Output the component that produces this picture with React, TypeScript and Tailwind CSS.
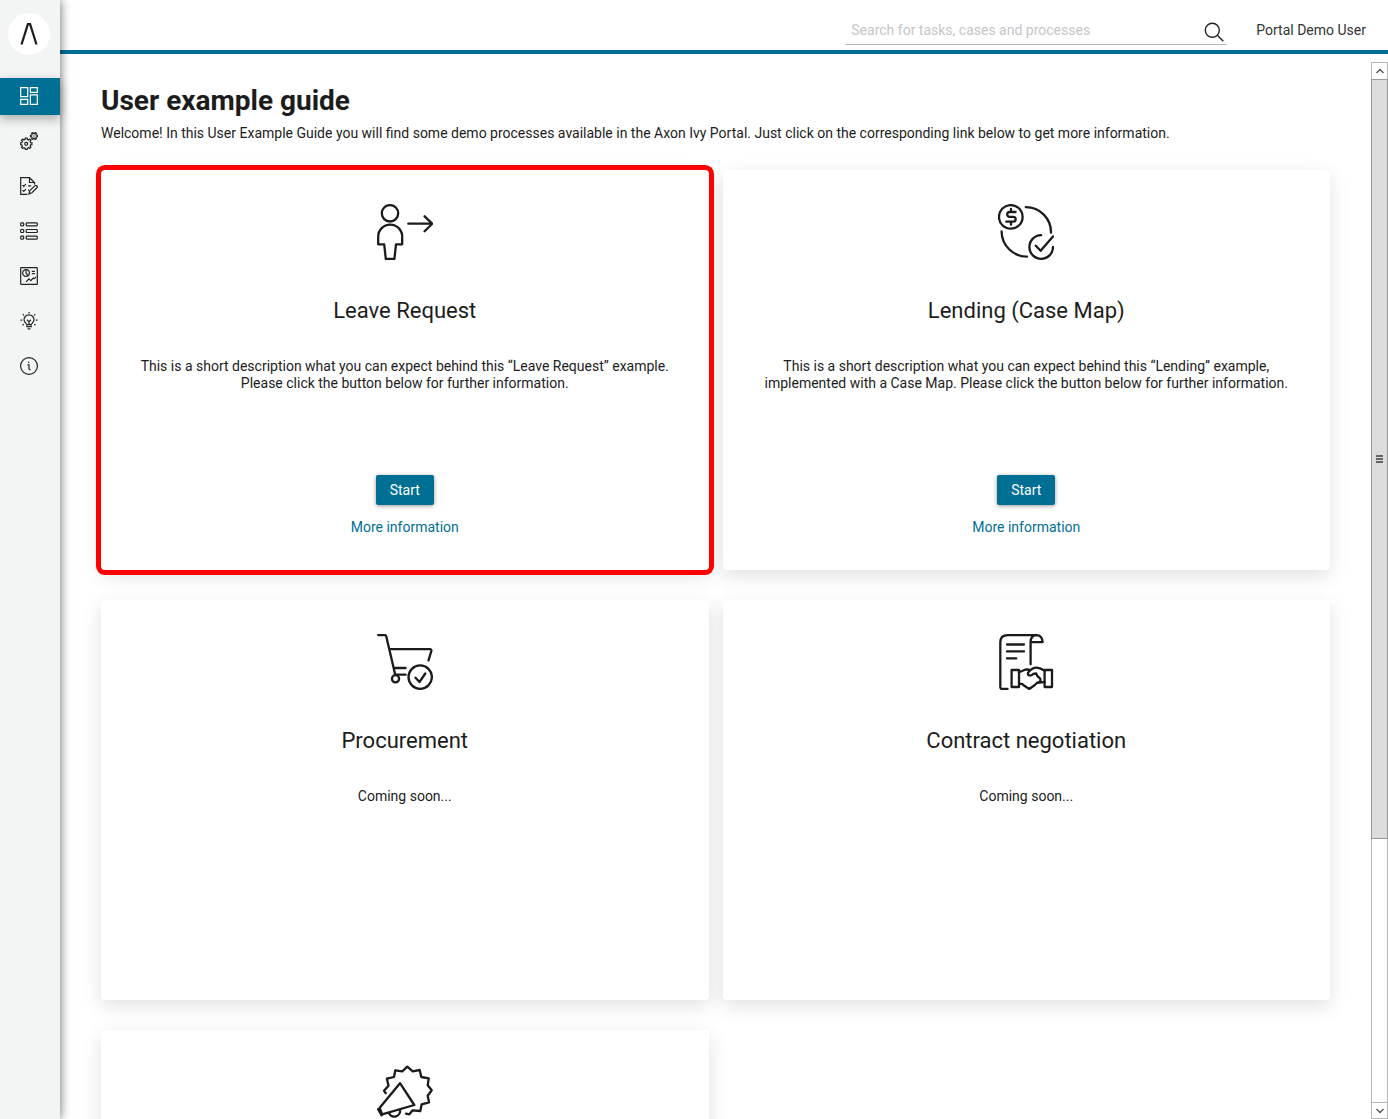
import type { ReactNode } from 'react'

function gearPath (cx: number, cy: number, outer: number, inner: number, teeth: number) {
	const points: string[] = []
	const step = (Math.PI * 2) / teeth
	for (let i = 0; i < teeth; i++) {
		const a = i * step
		const corners = [[-0.3, inner], [-0.2, outer], [0.2, outer], [0.3, inner]]
		corners.forEach(([o, r]) => {
			points.push(`${(cx + r * Math.cos(a + o * step)).toFixed(2)} ${(cy + r * Math.sin(a + o * step)).toFixed(2)}`)
		})
	}
	return `M${points.join('L')}Z`
}

const menu: { label: string, active?: boolean, icon: ReactNode }[] = [
	{
		label: 'Dashboard',
		active: true,
		icon: <path d="M.7.7h7v9h-7zM10.4.7h6.9v4.6h-6.9zM.7 12.3h7v5h-7zM10.4 7.8h6.9v9.5h-6.9z" />
	},
	{
		label: 'Processes',
		icon: (
			<>
				<path d={gearPath(6.2, 11.8, 5.8, 4.5, 8)} />
				<circle cx="6.2" cy="11.8" r="1.5" />
				<path d={gearPath(14, 4, 3.6, 2.5, 6)} />
				<circle cx="14" cy="4" r=".5" strokeWidth=".6" />
			</>
		)
	},
	{
		label: 'Tasks',
		icon: (
			<>
				<path d="M7.5 17.4H.7V.7h8.8l5 4.8v2M9.5.7v4.8h5" />
				<path d="M2.5 8.2l1.2 1.2 2.2-2.2M2.5 13.2l1.2 1.2 2.2-2.2M8 8.8h3.2M8 13.2h1" />
				<path d="M9 16.9l.8-3.3 5.3-5c1-.9 2.9.8 2 1.9l-5.2 5.2z" />
			</>
		)
	},
	{
		label: 'Cases',
		icon: (
			<>
				<rect x=".7" y=".9" width="3" height="3" rx=".8" />
				<rect x=".7" y="7.5" width="3" height="3" rx=".8" />
				<rect x=".7" y="14.1" width="3" height="3" rx=".8" />
				<rect x="6.2" y=".9" width="11.1" height="3" rx=".8" />
				<rect x="6.2" y="7.5" width="11.1" height="3" rx=".8" />
				<rect x="6.2" y="14.1" width="11.1" height="3" rx=".8" />
			</>
		)
	},
	{
		label: 'Statistics',
		icon: (
			<>
				<rect x=".7" y=".7" width="16.6" height="16.6" rx=".6" />
				<circle cx="6" cy="6" r="3.4" />
				<path d="M6 2.8V6l2 2.4M11.8 4.4h3M11.8 6.7h3M6 14.8l3-3 1.8 1.8 2.4-2.6 1 .8 1.8-2" />
			</>
		)
	},
	{
		label: 'Ideas',
		icon: (
			<>
				<path d="M6.8 12.6c0-1-2.8-2-2.8-4.8a5 5 0 0110 0c0 2.8-2.8 3.8-2.8 4.8zM6.8 13.4v1.2h4.4v-1.2M7.6 16.8h2.8M9 12.4V9.6M7 7.8l2 1.8 2-1.8" />
				<path d="M9 0v1.6M2.8 2.2l1.2 1.2M15.2 2.2L14 3.4M.5 8.2h1.7M15.8 8.2h1.7M2.6 13.2l1.2-1M15.4 13.2l-1.2-1" />
			</>
		)
	},
	{
		label: 'About',
		icon: (
			<>
				<circle cx="9" cy="9" r="8.4" />
				<path d="M7.4 7.8H9v4.2c0 .5.4.6 1.6.6M8.6 4.8v1.3" />
			</>
		)
	}
]

type CardItem = {
	id: string
	title?: string
	text?: string
	highlight?: boolean
	ready?: boolean
	icon: ReactNode
}

const cards: CardItem[] = [
	{
		id: 'leave',
		title: 'Leave Request',
		text: 'This is a short description what you can expect behind this “Leave Request” example. Please click the button below for further information.',
		highlight: true,
		ready: true,
		icon: (
			<>
				<circle cx="13" cy="9.3" r="8.2" />
				<path d="M1.2 40.3V32.6a12 12 0 0124 0v7.7H19L17.4 55H8.8L7.2 40.3z" />
				<path d="M31.3 19.7h24M47.6 12.3l7.7 7.4-7.7 7.6" />
			</>
		)
	},
	{
		id: 'lending',
		title: 'Lending (Case Map)',
		text: 'This is a short description what you can expect behind this “Lending” example, implemented with a Case Map. Please click the button below for further information.',
		ready: true,
		icon: (
			<>
				<circle cx="12.8" cy="12.9" r="11.8" />
				<path d="M17.6 8h-6a2.4 2.4 0 000 4.8h3.600a2.400 2.400 0 010 4.900H8.300M13 5v3M13 17.700v3" />
				<path d="M27.8 3.200A25 25 0 0153 28.700M3.600 27.500a25.500 25.500 0 0025.400 25.200" />
				<path d="M43.200 31.200a11.800 11.800 0 1011.800 11.800M37.800 41.800l4.800 5L55 32.400" />
			</>
		)
	},
	{
		id: 'procurement',
		title: 'Procurement',
		text: 'Coming soon...',
		icon: (
			<>
				<path d="M1.200 1.100h6.600q1.200 0 1.500 1.300l9 38.500M12.300 15.100h40.500q2 0 1.500 2L51.500 26.300M17.300 34h11.300M18.800 40.700h9.800" />
				<circle cx="18.500" cy="44.800" r="3.600" />
				<circle cx="43.200" cy="43.100" r="11.700" />
				<path d="M38.500 43.800l4 4.200 5.800-8.500" />
			</>
		)
	},
	{
		id: 'contract',
		title: 'Contract negotiation',
		text: 'Coming soon...',
		icon: (
			<>
				<path d="M9.500 55H4.300q-2 0-2-2V8.500Q2.300 1.200 9.800 1.200h29.300Q44.300 2 44.600 8.200H32.600V30.300M32.600 8.200q0-7 6.500-7" />
				<path d="M9 10.500h17M9 17.400h17M9 24.400h9.200" />
				<path d="M13.600 36H21v17h-7.400zM46.600 36H54v17h-7.400z" />
				<path d="M21 38.300l6-2.600q3-.6 5.300.6M46.600 36.700q-7.300-4.500-11.600-2.300-3 1.300-4.800 4.300c-1.500 3.300 3.300 3.700 5 1.200l3-.4q.5 2.500 3.400 4.500c2 2 .5 4.800-2.500 4.700M21 49.700q3.300-.4 5.300 2l5 3.300 5.500-4q1.800-2.800 5-2.400l4.800-.8" />
			</>
		)
	},
	{
		id: 'campaign',
		icon: (
			<>
				<path d="M8.600 29.200L7 26.700l4.500-5-1.600-7L17 13l1.300-6.700 7 1 5-4.600 5.400 4.600 7-1.300L44.300 13l7.400 1.300-1 7 4 5-4 5.400 1.300 6.600-7.300 2-1.400 6.700-7.600-.7-3.400 4-3.300-.6" />
				<path d="M23 19.200L2.700 43.800l2.400 6.500L37.300 41zM1.200 45.300l3.500 6M12 49.300a5.800 5.800 0 0011-3.300" />
			</>
		)
	}
]

function Sidebar () {
	return (
		<aside className="relative z-20 w-15 shrink-0 bg-[#f3f5f5] shadow-[0_0_10px_rgba(0,0,0,0.6)]">
			<a href="#" aria-label="Home" className="mt-[13px] ml-2 flex size-[42px] items-center justify-center rounded-full bg-white">
				<svg className="h-[22px] w-[18px]" viewBox="0 0 18 22" fill="none" stroke="#1c1c1c" strokeWidth="2.2">
					<path d="M1.500 21.500L7.900 1.200h2.200l6.400 20.300" />
				</svg>
			</a>
			<nav className="mt-[23px] flex flex-col gap-2">
				{menu.map((item) => (
					<a
						key={item.label}
						href="#"
						aria-label={item.label}
						className={item.active
							? 'flex h-[37px] items-start bg-[#006f94] pt-[9px] pl-5 text-white shadow-[0_4px_10px_rgba(0,0,0,0.3)]'
							: 'flex h-[37px] items-start pt-[9px] pl-5 text-[#222]'}
					>
						<svg className="size-[18px]" viewBox="0 0 18 18" fill="none" stroke="currentColor" strokeWidth="1.2">
							{item.icon}
						</svg>
					</a>
				))}
			</nav>
		</aside>
	)
}

function Header () {
	return (
		<header className="flex h-[54px] shrink-0 items-end justify-end gap-[29px] border-b-4 border-[#006f94] pr-[22px] pb-[5px]">
			<form className="flex h-[29px] w-[382px] items-center border-b border-[#b5b5b5] pr-[3px] pl-1.5">
				<input
					type="text"
					aria-label="Search"
					placeholder="Search for tasks, cases and processes"
					className="min-w-0 flex-1 text-sm outline-none placeholder:text-[#c4c6c8]"
				/>
				<button type="button" aria-label="Start search" className="mt-1">
					<svg className="size-5" viewBox="0 0 20 20" fill="none" stroke="#222" strokeWidth="1.4">
						<circle cx="8.3" cy="8.3" r="7" />
						<path d="M13.300 13.300l6 6" />
					</svg>
				</button>
			</form>
			<a href="#" className="h-[29px] pt-1 text-sm text-[#333]">Portal Demo User</a>
		</header>
	)
}

function Card ({ title, text, highlight, ready, icon }: CardItem) {
	return (
		<article
			className={highlight
				? 'relative z-10 flex h-[400px] flex-col items-center rounded-sm bg-white px-8 py-[34px] text-center shadow-[0_6px_20px_rgba(0,0,0,0.12)] ring-5 ring-[#ff0000]'
				: 'flex h-[400px] flex-col items-center rounded-sm bg-white px-8 py-[34px] text-center shadow-[0_6px_20px_rgba(0,0,0,0.12)]'}
		>
			<svg className="size-14 shrink-0" viewBox="0 0 56 56" fill="none" stroke="#1b1b1b" strokeWidth="2.3" strokeLinecap="round" strokeLinejoin="round">
				{icon}
			</svg>
			{title && <h2 className="mt-[37px] text-[22px] leading-7">{title}</h2>}
			{text && <p className="mt-[33px] text-sm leading-[17px]">{text}</p>}
			{ready && (
				<div className="mt-auto flex flex-col items-center gap-3.5 text-sm">
					<button type="button" className="h-[30px] rounded-xs bg-[#006f94] px-3.5 text-white shadow-[0_1px_4px_rgba(0,0,0,0.4)]">Start</button>
					<a href="#" className="leading-[17px] text-[#006f94]">More information</a>
				</div>
			)}
		</article>
	)
}

function Scrollbar () {
	return (
		<div className="mt-2 flex w-[17px] shrink-0 flex-col border border-[#b5b5b5] bg-white">
			<button type="button" aria-label="Scroll up" className="flex h-4 items-center justify-center">
				<svg className="size-2" viewBox="0 0 8 8" fill="none" stroke="#555" strokeWidth="1.4"><path d="M.5 6L4 2.500 7.500 6" /></svg>
			</button>
			<div className="-mx-px flex-1">
				<div className="flex h-[74.3%] flex-col items-center justify-center gap-px border border-[#999] bg-[#dcdcdc]">
					<span className="h-0.5 w-[7px] bg-[#666]" />
					<span className="h-0.5 w-[7px] bg-[#666]" />
					<span className="h-0.5 w-[7px] bg-[#666]" />
				</div>
			</div>
			<button type="button" aria-label="Scroll down" className="flex h-4 items-center justify-center border-t border-[#b5b5b5]">
				<svg className="size-2" viewBox="0 0 8 8" fill="none" stroke="#555" strokeWidth="1.4"><path d="M.5 2L4 5.500 7.500 2" /></svg>
			</button>
		</div>
	)
}

export default function App () {
	return (
		<div className="flex h-screen overflow-hidden bg-white font-[Roboto,sans-serif] text-[#1c1c1c]">
			<Sidebar />
			<div className="flex min-w-0 flex-1 flex-col">
				<Header />
				<div className="flex min-h-0 flex-1">
					<main className="min-w-0 flex-1 overflow-hidden px-[41px] pt-[31px]">
						<h1 className="text-[28px] leading-8 font-bold">User example guide</h1>
						<p className="mt-2 text-sm leading-[17px]">
							Welcome! In this User Example Guide you will find some demo processes available in the Axon Ivy Portal. Just click on the corresponding link below to get more information.
						</p>
						<div className="mt-7 grid grid-cols-2 gap-x-3.5 gap-y-[30px]">
							{cards.map((card) => <Card key={card.id} {...card} />)}
						</div>
					</main>
					<Scrollbar />
				</div>
			</div>
		</div>
	)
}
